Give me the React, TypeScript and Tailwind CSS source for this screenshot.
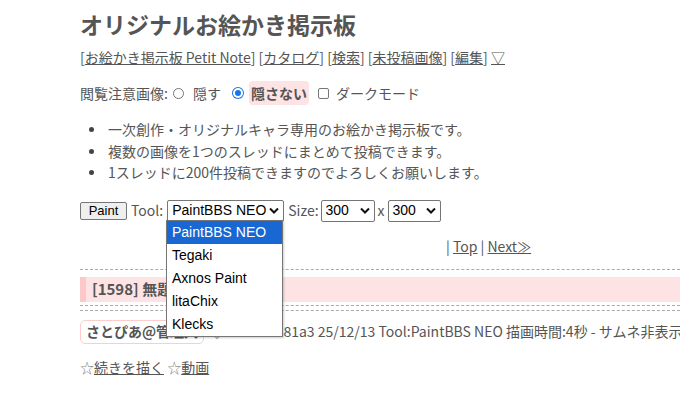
import React from 'react';

const jp = { fontFamily: '"Noto Sans CJK JP", "Noto Sans", sans-serif' };

const Chevron = () => (
  <svg width="10" height="7" viewBox="0 0 10 7" className="shrink-0">
    <path d="M1 1.5 L5 5.5 L9 1.5" fill="none" stroke="#111" strokeWidth="2" />
  </svg>
);

const FakeSelect = ({ value, width }: { value: string; width: string }) => (
  <div
    className={`flex items-center justify-between h-[22px] ${width} border border-[#767676] rounded-[2px] bg-white pl-[4px] pr-[4px] text-[14px] text-black`}
    style={{ fontFamily: '"Liberation Sans", Arial, sans-serif' }}
  >
    <span>{value}</span>
    <Chevron />
  </div>
);

const tools = ['PaintBBS NEO', 'Tegaki', 'Axnos Paint', 'litaChix', 'Klecks'];

const App = () => {
  return (
    <div className="relative w-[680px] h-[411px] overflow-hidden bg-white text-[#555] pl-[80px]" style={jp}>
      <h1 className="text-[23px] font-bold leading-[34px] pt-[7px] text-[#555]">オリジナルお絵かき掲示板</h1>

      <div className="mt-[6px] text-[14px] leading-[21px] whitespace-nowrap">
        [<span className="underline">お絵かき掲示板 Petit Note</span>] [<span className="underline">カタログ</span>] [
        <span className="underline">検索</span>] [<span className="underline">未投稿画像</span>] [
        <span className="underline">編集</span>] <span className="underline">▽</span>
      </div>

      <div className="mt-[13px] flex items-center h-[24px] text-[14px] whitespace-nowrap">
        <span>閲覧注意画像:</span>
        <span className="ml-[5px] w-[11px] h-[11px] rounded-full border border-[#767676]" />
        <span className="ml-[9px]">隠す</span>
        <span className="ml-[11px] w-[12px] h-[12px] rounded-full bg-[#1a73e8] flex items-center justify-center">
          <span className="w-[10px] h-[10px] rounded-full bg-white flex items-center justify-center">
            <span className="w-[6px] h-[6px] rounded-full bg-[#1a73e8]" />
          </span>
        </span>
        <span className="ml-[5px] px-[2px] rounded-[4px] bg-[#fde3e3] font-bold leading-[24px] text-[#555]">隠さない</span>
        <span className="ml-[9px] w-[11px] h-[11px] rounded-[2px] border border-[#767676]" />
        <span className="ml-[7px]">ダークモード</span>
      </div>

      <ul className="mt-[14px] text-[14px] leading-[21.5px]">
        {[
          '一次創作・オリジナルキャラ専用のお絵かき掲示板です。',
          '複数の画像を1つのスレッドにまとめて投稿できます。',
          '1スレッドに200件投稿できますのでよろしくお願いします。',
        ].map((t, i) => (
          <li key={i} className="flex items-center">
            <span className="ml-[9px] w-[5px] h-[5px] rounded-full bg-[#444]" />
            <span className="ml-[14px]">{t}</span>
          </li>
        ))}
      </ul>

      <div className="mt-[16px] flex items-center h-[22px] text-[14px] whitespace-nowrap">
        <div
          className="h-[18px] w-[47px] flex items-center justify-center border border-[#767676] rounded-[2px] bg-[#efefef] text-[13px] text-black"
          style={{ fontFamily: '"Liberation Sans", Arial, sans-serif' }}
        >
          Paint
        </div>
        <span className="ml-[4px]">Tool:</span>
        <div className="ml-[4px]">
          <FakeSelect value="PaintBBS NEO" width="w-[117px]" />
        </div>
        <span className="ml-[4px]">Size:</span>
        <div className="ml-[2px]">
          <FakeSelect value="300" width="w-[54px]" />
        </div>
        <span className="mx-[3px]">x</span>
        <FakeSelect value="300" width="w-[53px]" />
      </div>

      <div className="mt-[13px] text-[14px] leading-[22px] pl-[366px] whitespace-nowrap">
        | <span className="underline">Top</span> | <span className="underline">Next≫</span>
      </div>

      <div className="mt-[12px] border-t border-dashed border-[#aaa]" />

      <div className="mt-[7px] h-[25px] flex items-center bg-[#fde3e3] border-l-[6px] border-[#fdc8c8] pl-[6px] text-[15px] font-bold whitespace-nowrap">
        [1598] 無題
      </div>
      <div className="mt-[3px] border-t border-dashed border-[#aaa]" />
      <div className="mt-[4px] border-t border-dashed border-[#aaa]" />

      <div className="mt-[9px] flex items-center text-[14px] whitespace-nowrap">
        <span className="h-[24px] flex items-center px-[5px] border border-[#fcc] rounded-[5px] font-bold">
          さとぴあ@管理人
        </span>
        <span className="ml-[6px]">◇ 4b12d6881a3 25/12/13 Tool:PaintBBS NEO 描画時間:4秒 - サムネ非表示</span>
      </div>

      <div className="mt-[12px] text-[14px] leading-[22px] whitespace-nowrap">
        <span className="text-[#888]">☆</span>
        <span className="underline">続きを描く</span> <span className="text-[#888]">☆</span>
        <span className="underline">動画</span>
      </div>

      <div
        className="absolute left-[166px] top-[220px] w-[117px] border border-[#767676] bg-white text-[14px] text-black shadow-[1px_1px_2px_rgba(0,0,0,0.2)]"
        style={{ fontFamily: '"Liberation Sans", Arial, sans-serif' }}
      >
        {tools.map((t, i) => (
          <div
            key={t}
            className={`h-[23px] flex items-center pl-[5px] ${i === 0 ? 'bg-[#1967d2] text-white' : ''}`}
          >
            {t}
          </div>
        ))}
      </div>
    </div>
  );
};

export default App;
